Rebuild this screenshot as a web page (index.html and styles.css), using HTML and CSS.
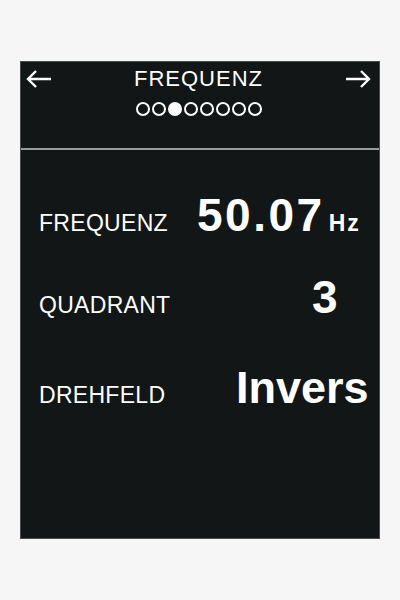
FILE: index.html
```html
<!DOCTYPE html>
<html lang="de">
<head>
    <meta charset="UTF-8">
    <meta name="viewport" content="width=device-width, initial-scale=1.0">
    <title>Frequenz</title>
    <link rel="stylesheet" href="styles.css">
</head>
<body>
    <div class="screen">
        <div class="header">
            <div class="header-top">
                <svg class="arrow" width="28" height="20" viewBox="0 0 28 20">
                    <path d="M26 10H3M11 2L3 10L11 18" fill="none" stroke="#fff" stroke-width="2.4"/>
                </svg>
                <h1 class="title">FREQUENZ</h1>
                <svg class="arrow" width="28" height="20" viewBox="0 0 28 20">
                    <path d="M2 10H25M17 2L25 10L17 18" fill="none" stroke="#fff" stroke-width="2.4"/>
                </svg>
            </div>
            <div class="dots">
                <span class="dot"></span>
                <span class="dot"></span>
                <span class="dot active"></span>
                <span class="dot"></span>
                <span class="dot"></span>
                <span class="dot"></span>
                <span class="dot"></span>
                <span class="dot"></span>
            </div>
        </div>

        <div class="rows">
            <div class="row row-freq">
                <span class="label">FREQUENZ</span>
                <span class="value">50.07<span class="unit">Hz</span></span>
            </div>
            <div class="row row-quad">
                <span class="label">QUADRANT</span>
                <span class="value">3</span>
            </div>
            <div class="row row-dreh">
                <span class="label">DREHFELD</span>
                <span class="value">Invers</span>
            </div>
        </div>
    </div>
</body>
</html>
```

FILE: styles.css
```css
* {
    margin: 0;
    padding: 0;
    box-sizing: border-box;
}

body {
    font-family: "Liberation Sans", Arial, sans-serif;
    background-color: #f6f6f6;
    padding: 61px 20px 0 20px;
    height: 600px;
}

.screen {
    height: 478px;
    background-color: #121616;
    border: 1px solid #4a4e4e;
    color: #fff;
}

.header {
    height: 88px;
    border-bottom: 2px solid #9a9c9c;
    padding-top: 5px;
}

.header-top {
    display: flex;
    align-items: center;
    justify-content: space-between;
    padding: 0 7px 0 4px;
    height: 24px;
}

.title {
    font-size: 22px;
    font-weight: normal;
    letter-spacing: 1px;
}

.dots {
    display: flex;
    justify-content: center;
    gap: 2px;
    margin-top: 11px;
    padding-right: 2px;
}

.dot {
    width: 14px;
    height: 14px;
    border: 2px solid #fff;
    border-radius: 50%;
}

.dot.active {
    background-color: #fff;
}

.rows {
    padding: 42px 0 0 18px;
}

.row {
    display: flex;
    align-items: baseline;
    line-height: 1;
}

.row-freq {
    height: 82px;
}

.row-quad {
    height: 91px;
}

.label {
    font-size: 23px;
    letter-spacing: 0.3px;
    width: 158px;
}

.value {
    font-size: 46px;
    font-weight: bold;
}

.row-freq .value {
    letter-spacing: 2.5px;
}

.unit {
    font-size: 23px;
    letter-spacing: 2px;
    margin-left: 4px;
}

.row-quad .value {
    margin-left: 115px;
}

.row-dreh .value {
    font-size: 45px;
    margin-left: 39px;
}
```
